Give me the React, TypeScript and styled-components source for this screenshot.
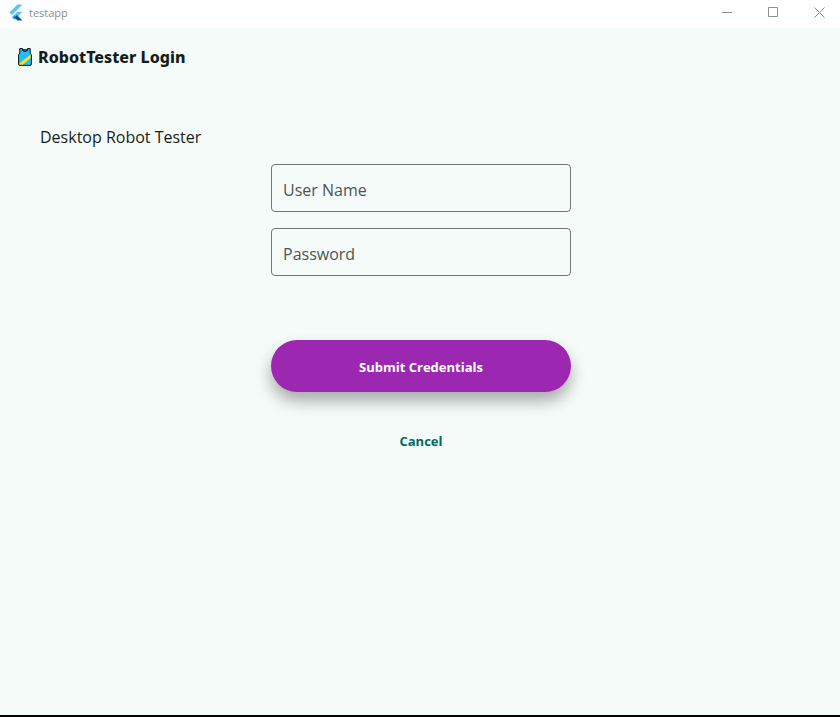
import React from "react";
import styled, { createGlobalStyle } from "styled-components";

const GlobalStyle = createGlobalStyle`
  *, *::before, *::after { box-sizing: border-box; }
  body {
    margin: 0;
    background: #f5fbf9;
    color: #171d1b;
    font-family: "Open Sans", "Noto Sans", sans-serif;
  }
`;

const Window = styled.div`
  display: flex;
  flex-direction: column;
  min-height: 100vh;
  border-bottom: 2px solid #000;
`;

const TitleBar = styled.header`
  display: flex;
  align-items: flex-start;
  justify-content: space-between;
  height: 28px;
  background: #fff;
`;

const WindowTitle = styled.div`
  display: flex;
  align-items: center;
  gap: 6px;
  height: 24px;
  padding-left: 9px;
  color: #8e8e8e;
  font-size: 11px;
`;

const WindowControls = styled.div`
  display: flex;
`;

const WindowButton = styled.button`
  display: grid;
  place-items: center;
  width: 46px;
  height: 24px;
  padding: 0 0 0 5px;
  border: 0;
  background: transparent;
  color: #8f8f8f;
`;

const AppBar = styled.div`
  display: flex;
  align-items: center;
  gap: 6px;
  height: 58px;
  padding: 0 18px;
`;

const AppTitle = styled.h1`
  margin: 0;
  font-family: "Noto Sans", sans-serif;
  font-size: 16px;
  line-height: 24px;
  font-weight: 800;
`;

const Page = styled.main`
  display: flex;
  flex-direction: column;
  padding: 39px 38px 0 40px;
`;

const Heading = styled.h2`
  margin: 0 0 15px;
  font-size: 16px;
  line-height: 24px;
  font-weight: 400;
`;

const LoginForm = styled.form`
  display: flex;
  flex-direction: column;
  align-items: center;
  gap: 16px;
`;

const TextField = styled.input`
  width: 100%;
  max-width: 300px;
  height: 48px;
  padding: 3px 11px 0;
  border: 1px solid #6f7977;
  border-radius: 4px;
  background: transparent;
  color: #171d1b;
  font: 400 16px/24px "Open Sans", sans-serif;
  &::placeholder { color: #4b5553; opacity: 1; }
  &:focus { outline: 1px solid #006b5f; border-color: #006b5f; }
`;

const Actions = styled.div`
  display: flex;
  flex-direction: column;
  align-items: center;
  gap: 32px;
  width: 100%;
  margin-top: 48px;
`;

const SubmitButton = styled.button`
  width: 100%;
  max-width: 300px;
  height: 52px;
  padding: 2px 24px 0;
  border: 0;
  border-radius: 26px;
  background: #9c27b0;
  box-shadow: 0 9px 16px rgba(0, 0, 0, 0.32);
  color: #fff;
  font: 700 13px/20px "Open Sans", sans-serif;
`;

const CancelButton = styled.button`
  height: 34px;
  padding: 0 12px;
  border: 0;
  border-radius: 17px;
  background: transparent;
  color: #006b5f;
  font: 700 13px/20px "Open Sans", sans-serif;
`;

const FlutterLogo = () => (
  <svg width="14" height="17" viewBox="0 0 14 17" aria-hidden="true">
    <path d="M8.5 0.5H13.5L3 11L0.5 8.5Z" fill="#54c5f8" />
    <path d="M8.5 7.8H13.5L7.9 13.2L5.4 10.7Z" fill="#54c5f8" />
    <path d="M5.4 10.7L7.9 13.2L5.4 15.7L3 13.2Z" fill="#29a6e8" />
    <path d="M7.9 11.1L13.5 16.5H8.5L5.4 13.6Z" fill="#01579b" />
  </svg>
);

const vestOutline =
  "M1.8 0.6H4.6V2.6Q7 4.4 9.4 2.6V0.6H12.2V5Q12.4 6.1 13.4 6.6V16Q13.4 17.4 12 17.4H2Q0.6 17.4 0.6 16V6.6Q1.6 6.1 1.8 5Z";

const VestIcon = () => (
  <svg width="14" height="18" viewBox="0 0 14 18" aria-hidden="true">
    <path d={vestOutline} fill="#1fc0f8" />
    <path d="M4.6 1H9.4V2.6Q7 4.4 4.6 2.6Z" fill="#0f5fa6" />
    <path d="M13 6.2V9.8L4.6 17H2Q1 17 1 16V15.4Z" fill="#ffdb12" />
    <path d={vestOutline} fill="none" stroke="#080f16" />
  </svg>
);

const MinimizeIcon = () => (
  <svg width="11" height="11" viewBox="0 0 11 11" aria-hidden="true">
    <path d="M0 5.5H10" stroke="currentColor" />
  </svg>
);

const MaximizeIcon = () => (
  <svg width="11" height="11" viewBox="0 0 11 11" fill="none" aria-hidden="true">
    <path d="M0.5 0.5H9.5V9.5H0.5Z" stroke="currentColor" />
  </svg>
);

const CloseIcon = () => (
  <svg width="11" height="11" viewBox="0 0 11 11" aria-hidden="true">
    <path d="M0.5 0.5L10.5 10.5M10.5 0.5L0.5 10.5" stroke="currentColor" />
  </svg>
);

export default function App() {
  return (
    <Window>
      <GlobalStyle />
      <TitleBar>
        <WindowTitle>
          <FlutterLogo />
          <span>testapp</span>
        </WindowTitle>
        <WindowControls>
          <WindowButton type="button" aria-label="Minimize"><MinimizeIcon /></WindowButton>
          <WindowButton type="button" aria-label="Maximize"><MaximizeIcon /></WindowButton>
          <WindowButton type="button" aria-label="Close"><CloseIcon /></WindowButton>
        </WindowControls>
      </TitleBar>
      <AppBar>
        <VestIcon />
        <AppTitle>RobotTester Login</AppTitle>
      </AppBar>
      <Page>
        <Heading>Desktop Robot Tester</Heading>
        <LoginForm onSubmit={(event: React.FormEvent) => event.preventDefault()}>
          <TextField type="text" placeholder="User Name" aria-label="User Name" autoComplete="username" />
          <TextField type="password" placeholder="Password" aria-label="Password" autoComplete="current-password" />
          <Actions>
            <SubmitButton type="submit">Submit Credentials</SubmitButton>
            <CancelButton type="button">Cancel</CancelButton>
          </Actions>
        </LoginForm>
      </Page>
    </Window>
  );
}
